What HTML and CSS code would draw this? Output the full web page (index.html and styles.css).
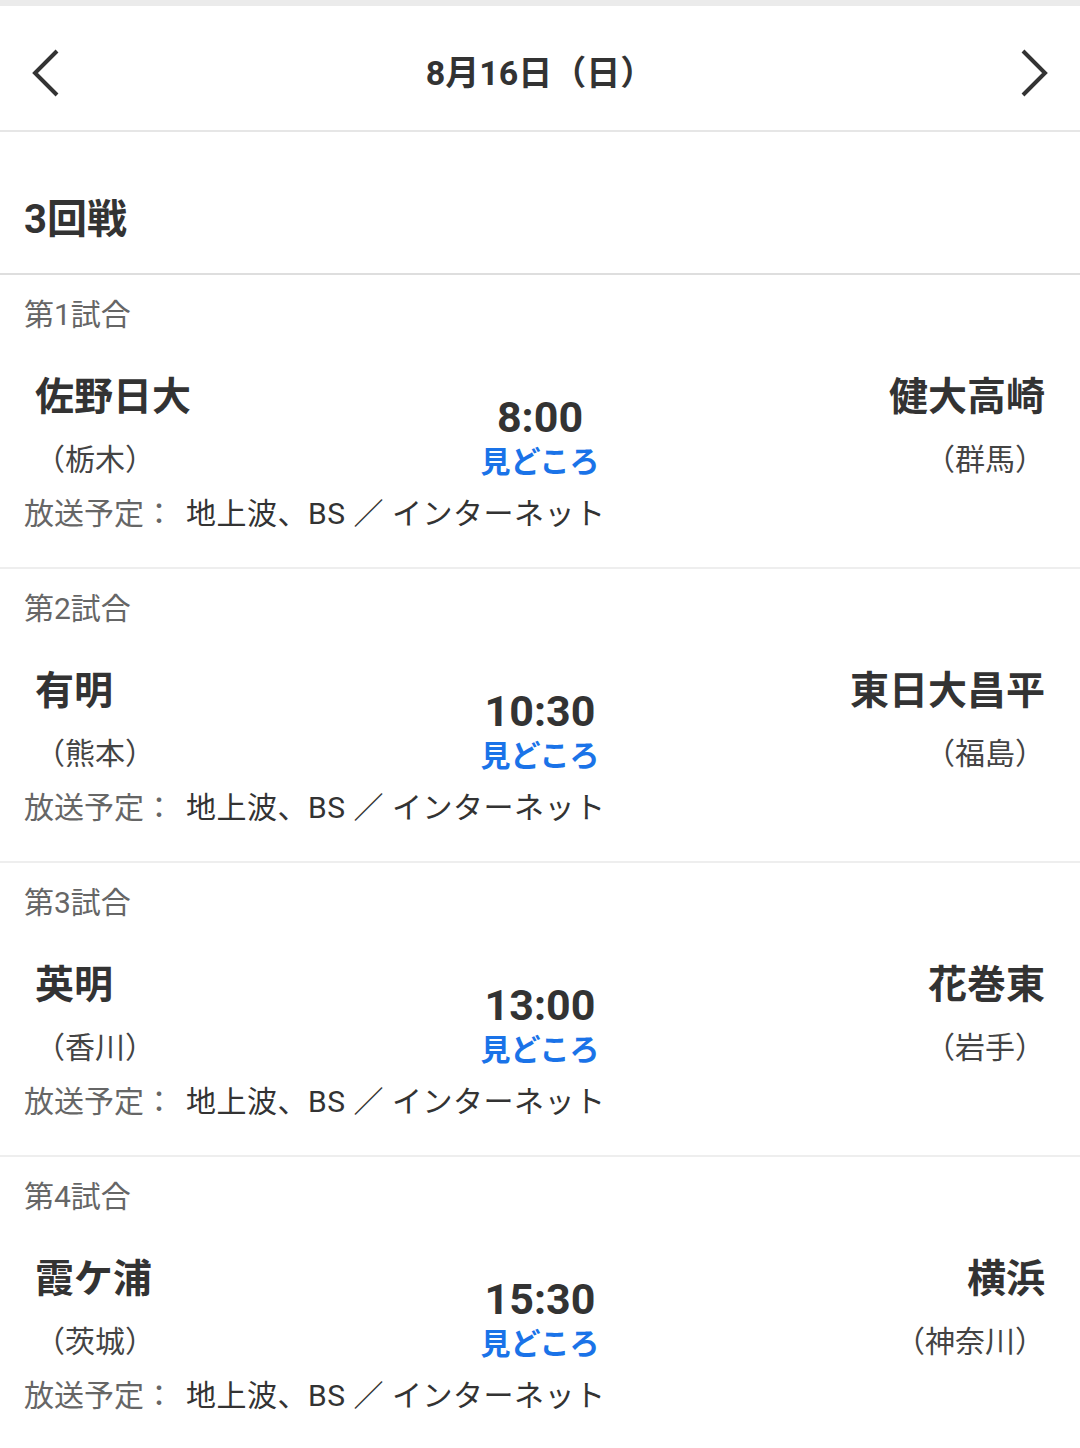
FILE: index.html
```html
<!DOCTYPE html>
<html>
	<head>
		<title>3回戦 8月16日</title>
		<meta charset="utf-8">
		<link rel="stylesheet" href="styles.css">
	</head>

	<body>
		<div class="topStrip"></div>

		<div class="dateBar">
			<span class="arrow">
				<svg width="30" height="48" viewBox="0 0 30 48"><polyline points="26,2 4,24 26,46" fill="none" stroke="#333" stroke-width="4"/></svg>
			</span>
			<h1 class="dateTitle">8月16日（日）</h1>
			<span class="arrow">
				<svg width="30" height="48" viewBox="0 0 30 48"><polyline points="4,2 26,24 4,46" fill="none" stroke="#333" stroke-width="4"/></svg>
			</span>
		</div>

		<div class="roundTitle">3回戦</div>

		<div class="match">
			<div class="matchNo">第1試合</div>
			<div class="matchRow">
				<div class="team">
					<div class="teamName">佐野日大</div>
					<div class="pref">（栃木）</div>
				</div>
				<div class="middle">
					<div class="startTime">8:00</div>
					<a class="highlight">見どころ</a>
				</div>
				<div class="team right">
					<div class="teamName">健大高崎</div>
					<div class="pref">（群馬）</div>
				</div>
			</div>
			<div class="broadcast"><span class="label">放送予定：</span><span class="channels">地上波、BS ／ インターネット</span></div>
		</div>

		<div class="match">
			<div class="matchNo">第2試合</div>
			<div class="matchRow">
				<div class="team">
					<div class="teamName">有明</div>
					<div class="pref">（熊本）</div>
				</div>
				<div class="middle">
					<div class="startTime">10:30</div>
					<a class="highlight">見どころ</a>
				</div>
				<div class="team right">
					<div class="teamName">東日大昌平</div>
					<div class="pref">（福島）</div>
				</div>
			</div>
			<div class="broadcast"><span class="label">放送予定：</span><span class="channels">地上波、BS ／ インターネット</span></div>
		</div>

		<div class="match">
			<div class="matchNo">第3試合</div>
			<div class="matchRow">
				<div class="team">
					<div class="teamName">英明</div>
					<div class="pref">（香川）</div>
				</div>
				<div class="middle">
					<div class="startTime">13:00</div>
					<a class="highlight">見どころ</a>
				</div>
				<div class="team right">
					<div class="teamName">花巻東</div>
					<div class="pref">（岩手）</div>
				</div>
			</div>
			<div class="broadcast"><span class="label">放送予定：</span><span class="channels">地上波、BS ／ インターネット</span></div>
		</div>

		<div class="match">
			<div class="matchNo">第4試合</div>
			<div class="matchRow">
				<div class="team">
					<div class="teamName">霞ケ浦</div>
					<div class="pref">（茨城）</div>
				</div>
				<div class="middle">
					<div class="startTime">15:30</div>
					<a class="highlight">見どころ</a>
				</div>
				<div class="team right">
					<div class="teamName">横浜</div>
					<div class="pref">（神奈川）</div>
				</div>
			</div>
			<div class="broadcast"><span class="label">放送予定：</span><span class="channels">地上波、BS ／ インターネット</span></div>
		</div>
	</body>
</html>
```

FILE: styles.css
```css
body {
	margin: 0;
	background-color: #fff;
	color: #333;
	font-family: Roboto, "Noto Sans CJK JP", sans-serif;
}

.topStrip {
	height: 6px;
	background-color: #ebebeb;
}

.dateBar {
	display: flex;
	align-items: center;
	justify-content: space-between;
	height: 114px;
	padding: 10px 31px 0 31px;
	border-bottom: 2px solid #e6e6e6;
}

.arrow {
	display: flex;
}

.dateTitle {
	margin: 0;
	font-size: 34px;
	font-weight: bold;
	line-height: 44px;
}

.roundTitle {
	padding: 58px 24px 23px 24px;
	font-size: 40px;
	font-weight: bold;
	line-height: 60px;
	border-bottom: 2px solid #dedede;
}

.match {
	padding: 20px 24px 31px 24px;
	border-bottom: 2px solid #eeeeee;
}

.matchNo {
	font-size: 30px;
	line-height: 40px;
	color: #666;
}

.matchRow {
	display: grid;
	grid-template-columns: 1fr auto 1fr;
	align-items: end;
	margin-top: 34px;
	padding: 0 11px;
}

.teamName {
	font-size: 39px;
	font-weight: bold;
	line-height: 56px;
}

.pref {
	margin-top: 13px;
	font-size: 30px;
	line-height: 44px;
	color: #444;
}

.team.right {
	text-align: right;
}

.middle {
	display: flex;
	flex-direction: column;
	align-items: center;
}

.startTime {
	font-size: 43px;
	font-weight: bold;
	line-height: 50px;
}

.highlight {
	font-size: 30px;
	font-weight: bold;
	line-height: 40px;
	color: #1a73e8;
	text-decoration: none;
	cursor: pointer;
}

.broadcast {
	margin-top: 10px;
	font-size: 30px;
	line-height: 44px;
	color: #333;
}

.broadcast .label {
	color: #666;
	margin-right: 12px;
}

.broadcast .channels {
	letter-spacing: 0.5px;
}
```
